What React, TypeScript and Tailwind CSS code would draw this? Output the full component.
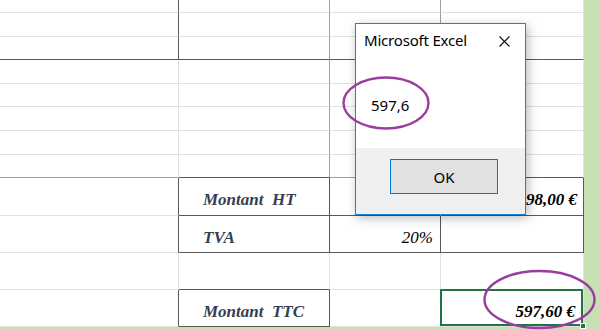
import React from "react";

type Tok = "l" | "m" | "d" | "n";

const RIGHT: Record<Tok, string> = {
  l: "border-r border-r-[#e1e1e1]",
  m: "border-r border-r-[#9aa0a6]",
  d: "border-r border-r-[#595959]",
  n: "border-r border-r-transparent",
};
const BOTTOM: Record<Tok, string> = {
  l: "border-b border-b-[#e1e1e1]",
  m: "border-b border-b-[#9aa0a6]",
  d: "border-b border-b-[#595959]",
  n: "border-b border-b-transparent",
};

// per row: [right, bottom] for columns A,B,C,D
const rows: { h: string; cells: [Tok, Tok][] }[] = [
  { h: "h-[13px]", cells: [["d", "l"], ["m", "l"], ["m", "l"], ["l", "l"]] },
  { h: "h-[24px]", cells: [["d", "l"], ["m", "l"], ["m", "l"], ["l", "l"]] },
  { h: "h-[23px]", cells: [["d", "d"], ["m", "d"], ["m", "d"], ["l", "d"]] },
  { h: "h-[24px]", cells: [["l", "l"], ["m", "l"], ["l", "l"], ["l", "l"]] },
  { h: "h-[23px]", cells: [["l", "l"], ["m", "l"], ["l", "l"], ["l", "l"]] },
  { h: "h-[24px]", cells: [["l", "l"], ["m", "l"], ["l", "l"], ["l", "l"]] },
  { h: "h-[24px]", cells: [["l", "l"], ["m", "l"], ["l", "l"], ["l", "l"]] },
  { h: "h-[23px]", cells: [["l", "m"], ["m", "d"], ["l", "m"], ["l", "d"]] },
  { h: "h-[38px]", cells: [["d", "l"], ["d", "d"], ["l", "d"], ["d", "d"]] },
  { h: "h-[37px]", cells: [["d", "l"], ["d", "d"], ["d", "d"], ["d", "d"]] },
  { h: "h-[37px]", cells: [["l", "l"], ["l", "d"], ["l", "l"], ["l", "l"]] },
  { h: "h-[37px]", cells: [["d", "l"], ["d", "d"], ["l", "l"], ["l", "l"]] },
];

const widths = ["w-[179px]", "w-[151px]", "w-[111px]", "w-[143px]"];

const serif = "font-['Liberation_Serif','Times_New_Roman',serif]";

function cellContent(r: number, c: number): React.ReactNode {
  const label = `${serif} text-[17px] font-bold italic text-[#333f50] whitespace-pre leading-[17px]`;
  const num = `${serif} text-[17px] font-bold italic text-black whitespace-pre leading-[17px]`;
  if (r === 8 && c === 1)
    return <div className="flex h-full items-end pl-[24px] pb-[7px]"><span className={label}>Montant  HT</span></div>;
  if (r === 9 && c === 1)
    return <div className="flex h-full items-end pl-[24px] pb-[6px]"><span className={label}>TVA</span></div>;
  if (r === 11 && c === 1)
    return <div className="flex h-full items-end pl-[24px] pb-[6px]"><span className={label}>Montant  TTC</span></div>;
  if (r === 8 && c === 3)
    return <div className="flex h-full items-end justify-end pr-[6px] pb-[7px]"><span className={num}>598,00 €</span></div>;
  if (r === 9 && c === 2)
    return (
      <div className="flex h-full items-end justify-end pr-[7px] pb-[6px]">
        <span className={`${serif} text-[17px] italic text-black leading-[17px]`}>20%</span>
      </div>
    );
  if (r === 11 && c === 3)
    return (
      <div className="relative h-full">
        <div className="absolute -left-px -top-px right-0 bottom-0 border-2 border-[#217346]" />
        <div className="absolute right-[-3px] bottom-[-3px] w-[6px] h-[6px] bg-[#217346] border border-white" />
        <div className="flex h-full items-end justify-end pr-[8px] pb-[6px]"><span className={num}>597,60 €</span></div>
      </div>
    );
  return null;
}

export default function App() {
  return (
    <div className="relative w-[600px] h-[330px] overflow-hidden bg-[#c6e0b4]">
      <div className="flex flex-col w-[584px] h-[327px] bg-white">
        {rows.map((row, r) => (
          <div key={r} className={`flex ${row.h}`}>
            {row.cells.map(([rt, bt], c) => (
              <div key={c} className={`${widths[c]} h-full shrink-0 ${RIGHT[rt]} ${BOTTOM[bt]}`}>
                {cellContent(r, c)}
              </div>
            ))}
          </div>
        ))}
      </div>

      {/* Message box */}
      <div className="absolute left-[355px] top-[23px] w-[171px] h-[192px] border border-[#1883d7] bg-white flex flex-col shadow-[2px_3px_10px_rgba(0,0,0,0.28)] font-['Noto_Sans','Open_Sans',sans-serif] text-black">
        <div className="h-[40px] flex items-start justify-between pl-[8px] pr-[15px]">
          <span className="mt-[6px] text-[15px] leading-[20px] tracking-[-0.2px]">Microsoft Excel</span>
          <svg className="mt-[12px]" width="11" height="11" viewBox="0 0 11 11">
            <path d="M0.5 0.5 L10.5 10.5 M10.5 0.5 L0.5 10.5" stroke="#111" strokeWidth="1.1" fill="none" />
          </svg>
        </div>
        <div className="flex-1 pl-[15px] pt-[29px]">
          <span className="text-[15px] leading-[20px]">597,6</span>
        </div>
        <div className="h-[66px] bg-[#f0f0f0] pl-[34px] pt-[11px]">
          <div className="w-[108px] h-[35px] border border-[#0078d7] bg-[#e1e1e1] flex items-center justify-center">
            <span className="text-[15px] leading-[20px]">OK</span>
          </div>
        </div>
      </div>

      {/* Annotations */}
      <svg className="absolute inset-0 pointer-events-none" width="600" height="330" viewBox="0 0 600 330">
        <ellipse cx="386" cy="103" rx="42.5" ry="25.5" fill="none" stroke="#9a3d9e" strokeWidth="2.4" />
        <ellipse cx="539.5" cy="299.5" rx="55" ry="28.5" fill="none" stroke="#9a3d9e" strokeWidth="2.4" />
      </svg>
    </div>
  );
}
